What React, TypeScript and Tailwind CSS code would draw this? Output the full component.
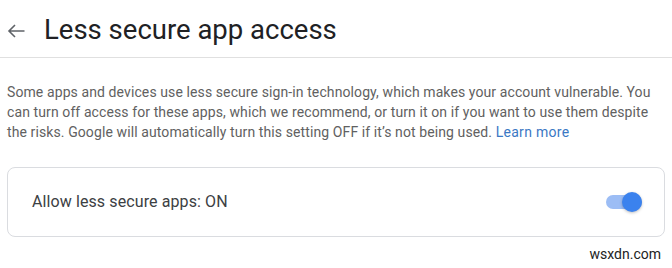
export default function App() {
  return (
    <div className="w-[672px] h-[268px] bg-white overflow-hidden font-['Roboto',_'Liberation_Sans',_sans-serif]">
      <header className="h-[58px] border-b border-[#e0e0e0] flex items-center">
        <div className="w-[44px] h-full flex items-center pl-[7px] pt-[5px]">
          <svg width="18" height="14" viewBox="0 0 18 14" fill="none" stroke="#5f6368" strokeWidth="1.6">
            <path d="M17.5 7H2M8 1 2 7l6 6" />
          </svg>
        </div>
        <h1 className="text-[27.5px] leading-none text-[#202124] pt-[2px]">Less secure app access</h1>
      </header>

      <div className="px-[7px] pt-[24px]">
        <p className="text-[14px] leading-[20px] text-[#616161] tracking-[0.1px]">
          Some apps and devices use less secure sign-in technology, which makes your account vulnerable. You
          can turn off access for these apps, which we recommend, or turn it on if you want to use them despite
          the risks. Google will automatically turn this setting OFF if it’s not being used.{' '}
          <a className="text-[#3b78c4] tracking-[0.3px]">Learn more</a>
        </p>

        <div className="mt-[25px] w-[658px] h-[70px] border border-[#dadce0] rounded-[8px] flex items-center justify-between pl-[24px] pr-[22px]">
          <span className="text-[16px] text-[#3c4043] tracking-[0.1px]">Allow less secure apps: ON</span>
          <div className="relative w-[36px] h-[14px]">
            <div className="absolute inset-0 rounded-full bg-[#9cbdf5]" />
            <div className="absolute right-0 top-1/2 -translate-y-1/2 w-[20px] h-[20px] rounded-full bg-[#3b82ee] shadow-[0_1px_3px_rgba(0,0,0,0.25)]" />
          </div>
        </div>

        <div className="flex justify-end pr-[4px] pt-[10px]">
          <span className="text-[14px] text-[#222] leading-none">wsxdn.com</span>
        </div>
      </div>
    </div>
  );
}
